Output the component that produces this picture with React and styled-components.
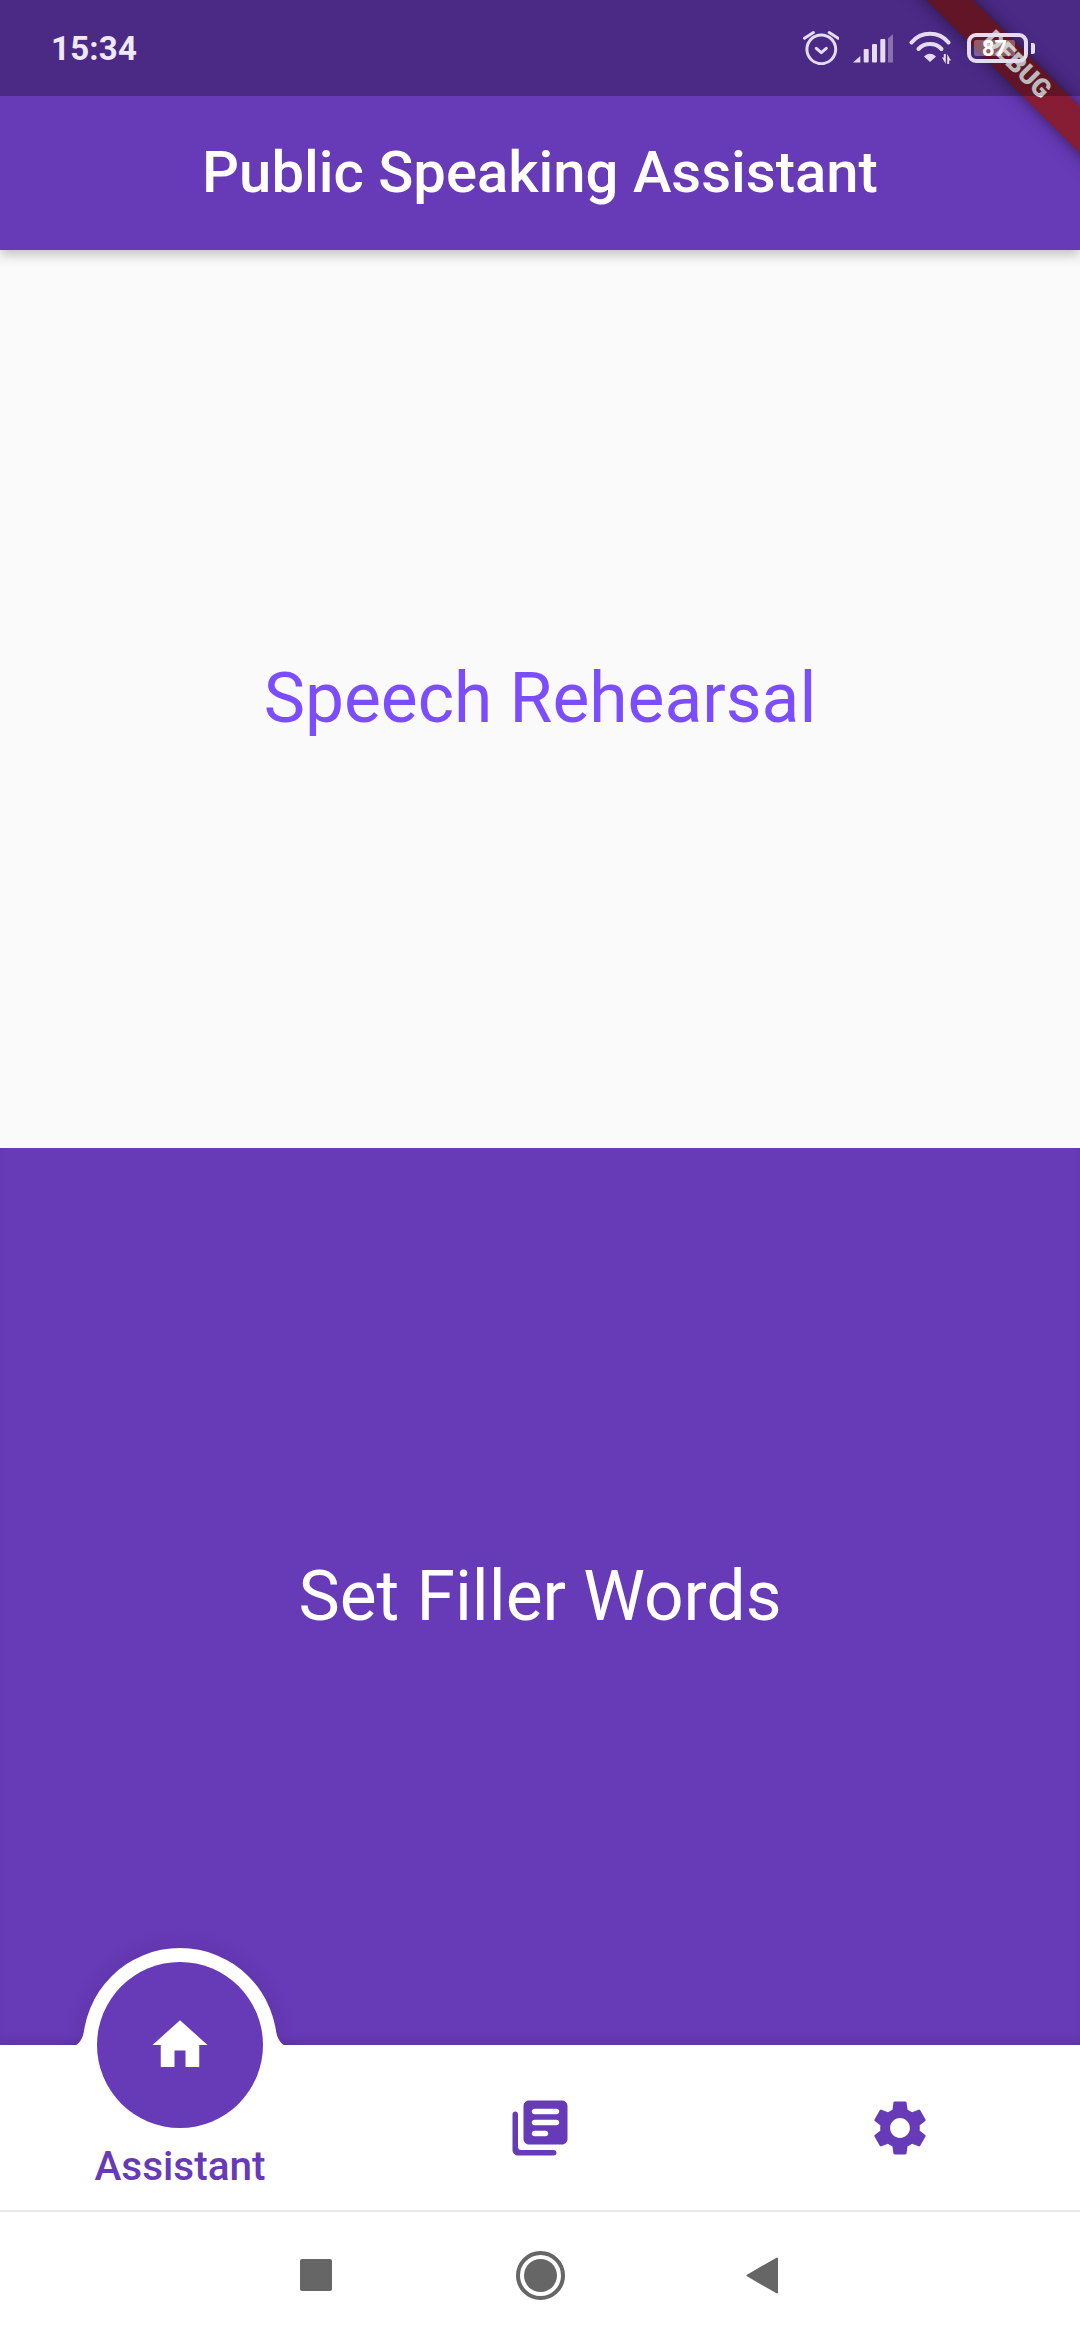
import styled, { createGlobalStyle } from "styled-components";

const PURPLE = "#673ab7";

const GlobalStyle = createGlobalStyle`
  html, body {
    margin: 0;
    padding: 0;
    background: #ffffff;
  }
  * {
    box-sizing: border-box;
  }
`;

const AlarmIcon = () => (
  <svg width="36" height="34" viewBox="0 0 36 34" fill="none" stroke="#e4dcf0" strokeWidth="3" strokeLinecap="round" strokeLinejoin="round">
    <circle cx="18.3" cy="18.3" r="14.4" />
    <path d="M1.5 7.3 10.4 1.6M26.2 1.6l8.9 5.7" />
    <path d="M13.3 17.3l5 4.4 5-4.4" />
  </svg>
);

const SignalIcon = () => (
  <SignalSvg width="40" height="29" viewBox="0 0 40 29" fill="#e4dcf0">
    <path d="M0 28.5 7.3 22v6.5z" />
    <rect x="10.7" y="15" width="5" height="13.5" rx="1" />
    <rect x="19" y="10" width="5" height="18.5" rx="1" />
    <rect x="27.3" y="5" width="5" height="23.5" rx="1" />
    <path d="M35 4.5 40 0v28.5h-5z" opacity="0.4" />
  </SignalSvg>
);

const WifiIcon = () => (
  <svg width="44" height="34" viewBox="0 0 44 34" fill="none">
    <path d="M2.5 11.5A24 24 0 0 1 39.5 11.5" stroke="#e4dcf0" strokeWidth="4" strokeLinecap="round" />
    <path d="M9.5 18A16 16 0 0 1 32.5 18" stroke="#e4dcf0" strokeWidth="4" strokeLinecap="round" />
    <path d="M16 25.5Q21 21.5 26 25.5L21 30z" fill="#e4dcf0" stroke="#e4dcf0" strokeWidth="1.6" strokeLinejoin="round" />
    <path d="M33 26.5h1.8v-3.5h2v10l-3.8-6.5zM38.2 23l3.8 6.5h-1.8V33h-2z" fill="#e4dcf0" />
  </svg>
);

const HomeIcon = () => (
  <svg width="66" height="66" viewBox="0 0 24 24" fill="#ffffff">
    <path d="M10 20v-6h4v6h5v-8h3L12 3 2 12h3v8z" />
  </svg>
);

const LibraryIcon = () => (
  <svg width="66" height="66" viewBox="0 0 24 24" fill={PURPLE}>
    <path d="M3 6c-.55 0-1 .45-1 1v13c0 1.1.9 2 2 2h13c.55 0 1-.45 1-1s-.45-1-1-1H5c-.55 0-1-.45-1-1V7c0-.55-.45-1-1-1zm17-4H8c-1.1 0-2 .9-2 2v12c0 1.1.9 2 2 2h12c1.1 0 2-.9 2-2V4c0-1.1-.9-2-2-2zm-2 9h-8c-.55 0-1-.45-1-1s.45-1 1-1h8c.55 0 1 .45 1 1s-.45 1-1 1zm-4 4h-4c-.55 0-1-.45-1-1s.45-1 1-1h4c.55 0 1 .45 1 1s-.45 1-1 1zm4-8h-8c-.55 0-1-.45-1-1s.45-1 1-1h8c.55 0 1 .45 1 1s-.45 1-1 1z" />
  </svg>
);

const SettingsIcon = () => (
  <svg width="66" height="66" viewBox="0 0 24 24" fill={PURPLE}>
    <path d="M19.14 12.94c.04-.3.06-.61.06-.94 0-.32-.02-.64-.07-.94l2.03-1.58c.18-.14.23-.41.12-.61l-1.92-3.32c-.12-.22-.37-.29-.59-.22l-2.39.96c-.5-.38-1.03-.7-1.62-.94l-.36-2.54c-.04-.24-.24-.41-.48-.41h-3.84c-.24 0-.43.17-.47.41l-.36 2.54c-.59.24-1.13.57-1.62.94l-2.39-.96c-.22-.08-.47 0-.59.22L2.74 8.87c-.12.21-.08.47.12.61l2.03 1.58c-.05.3-.09.63-.09.94s.02.64.07.94l-2.03 1.58c-.18.14-.23.41-.12.61l1.92 3.32c.12.22.37.29.59.22l2.39-.96c.5.38 1.03.7 1.62.94l.36 2.54c.05.24.24.41.48.41h3.84c.24 0 .44-.17.47-.41l.36-2.54c.59-.24 1.13-.56 1.62-.94l2.39.96c.22.08.47 0 .59-.22l1.92-3.32c.12-.22.07-.47-.12-.61l-2.01-1.58zM12 15.6c-1.98 0-3.6-1.62-3.6-3.6s1.62-3.6 3.6-3.6 3.6 1.62 3.6 3.6-1.62 3.6-3.6 3.6z" />
  </svg>
);

const BackIcon = () => (
  <svg width="32" height="37" viewBox="0 0 32 37" fill="#666666" stroke="#666666" strokeWidth="2" strokeLinejoin="round">
    <path d="M31 1.5v34L1.5 18.5z" />
  </svg>
);

const Fillet = ({ right }) => (
  <FilletShape $right={right} width="20" height="16" viewBox="0 0 20 16" fill="#ffffff">
    <path d="M2 16C8 16 12 10 14 2h6v14z" />
  </FilletShape>
);

const App = () => {
  return (
    <Screen>
      <GlobalStyle />
      <AppBar>Public Speaking Assistant</AppBar>
      <Main>
        <Panel>Speech Rehearsal</Panel>
        <Panel $filled>Set Filler Words</Panel>
      </Main>
      <BottomNav>
        <Notch>
          <Fillet />
          <Fillet right />
        </Notch>
        <NavRow>
          <NavItem>
            <ActiveCircle>
              <HomeIcon />
            </ActiveCircle>
            <NavLabel>Assistant</NavLabel>
          </NavItem>
          <NavItem>
            <LibraryIcon />
          </NavItem>
          <NavItem>
            <SettingsIcon />
          </NavItem>
        </NavRow>
      </BottomNav>
      <SystemNav>
        <SquareKey />
        <HomeKey>
          <HomeKeyDot />
        </HomeKey>
        <BackIcon />
      </SystemNav>
      <BannerClip>
        <DebugBanner>DEBUG</DebugBanner>
      </BannerClip>
      <StatusBar>
        <Clock>15:34</Clock>
        <StatusIcons>
          <AlarmIcon />
          <SignalIcon />
          <WifiIcon />
          <Battery>
            <BatteryBody>
              <BatteryLevel />
              <BatteryText>87</BatteryText>
            </BatteryBody>
            <BatteryTip />
          </Battery>
        </StatusIcons>
      </StatusBar>
    </Screen>
  );
};

const Screen = styled.div`
  position: relative;
  width: 1080px;
  height: 2340px;
  display: flex;
  flex-direction: column;
  overflow: hidden;
  font-family: Roboto, "Noto Sans", sans-serif;
  background: #ffffff;
`;

/* the system bar dims whatever is under it, the debug ribbon too */
const StatusBar = styled.div`
  position: absolute;
  z-index: 4;
  top: 0;
  left: 0;
  right: 0;
  height: 96px;
  display: flex;
  align-items: center;
  justify-content: space-between;
  padding: 0 45px 0 51px;
  background: rgba(0, 0, 0, 0.27);
`;

const Clock = styled.div`
  font-size: 33px;
  font-weight: 700;
  letter-spacing: 0.2px;
  color: #efe9f7;
`;

const StatusIcons = styled.div`
  display: flex;
  align-items: center;
  gap: 14px;
`;

const SignalSvg = styled.svg`
  margin-right: 2px;
`;

const Battery = styled.div`
  display: flex;
  align-items: center;
  gap: 3px;
`;

const BatteryBody = styled.div`
  position: relative;
  width: 61px;
  height: 30px;
  padding: 3px;
  border: 4.5px solid #e4dcf0;
  border-radius: 9px;
`;

const BatteryLevel = styled.div`
  width: 87%;
  height: 100%;
  background: rgba(255, 255, 255, 0.3);
  border-radius: 2px;
`;

const BatteryText = styled.div`
  position: absolute;
  inset: 0;
  display: flex;
  align-items: center;
  justify-content: center;
  padding-right: 6px;
  font-size: 22px;
  font-weight: 700;
  color: #ffffff;
`;

const BatteryTip = styled.div`
  width: 4px;
  height: 11px;
  background: #e4dcf0;
  border-radius: 0 2px 2px 0;
`;

const AppBar = styled.div`
  position: relative;
  z-index: 2;
  height: 250px;
  flex-shrink: 0;
  display: flex;
  align-items: center;
  justify-content: center;
  padding: 96px 0 3px;
  font-size: 58px;
  font-weight: 500;
  color: #ffffff;
  background: ${PURPLE};
  box-shadow: 0 5px 11px rgba(0, 0, 0, 0.22);
`;

const Main = styled.div`
  flex: 1;
  display: flex;
  flex-direction: column;
`;

const Panel = styled.div`
  flex: 1;
  display: flex;
  align-items: center;
  justify-content: center;
  font-size: 69.5px;
  font-weight: 400;
  color: ${(props) => (props.$filled ? "#ffffff" : "#7c4dff")};
  background: ${(props) => (props.$filled ? PURPLE : "#fafafa")};
  box-shadow: ${(props) => (props.$filled ? "inset 0 -10px 12px -8px rgba(0, 0, 0, 0.14)" : "none")};
`;

const BottomNav = styled.div`
  position: relative;
  height: 165px;
  flex-shrink: 0;
`;

const Notch = styled.div`
  position: absolute;
  left: 83px;
  top: -97px;
  width: 194px;
  height: 194px;
  border-radius: 50%;
  background: #ffffff;
  box-shadow: 0 0 22px rgba(0, 0, 0, 0.1);
`;

const FilletShape = styled.svg`
  position: absolute;
  top: 82px;
  left: ${(props) => (props.$right ? "auto" : "-13px")};
  right: ${(props) => (props.$right ? "-13px" : "auto")};
  transform: ${(props) => (props.$right ? "scaleX(-1)" : "none")};
`;

const NavRow = styled.div`
  position: relative;
  height: 100%;
  display: grid;
  grid-template-columns: repeat(3, 1fr);
  background: #ffffff;
`;

const NavItem = styled.div`
  position: relative;
  display: flex;
  align-items: flex-start;
  justify-content: center;
  padding-top: 50px;
`;

const ActiveCircle = styled.div`
  position: absolute;
  left: 97px;
  top: -83px;
  width: 166px;
  height: 166px;
  display: flex;
  align-items: center;
  justify-content: center;
  border-radius: 50%;
  background: ${PURPLE};
`;

const NavLabel = styled.div`
  position: absolute;
  left: 0;
  right: 0;
  top: 97px;
  text-align: center;
  font-size: 40.5px;
  line-height: 48px;
  font-weight: 500;
  color: ${PURPLE};
`;

const SystemNav = styled.div`
  height: 130px;
  flex-shrink: 0;
  display: flex;
  align-items: center;
  justify-content: center;
  gap: 183px;
  padding-right: 3px;
  padding-bottom: 2px;
  border-top: 2px solid #e8e8e8;
  background: #ffffff;
`;

const SquareKey = styled.div`
  width: 32px;
  height: 32px;
  border-radius: 2px;
  background: #666666;
`;

const HomeKey = styled.div`
  width: 49px;
  height: 49px;
  margin: 0 -2px 0 1px;
  display: flex;
  align-items: center;
  justify-content: center;
  border: 4px solid #666666;
  border-radius: 50%;
`;

const HomeKeyDot = styled.div`
  width: 33px;
  height: 33px;
  border-radius: 50%;
  background: #666666;
`;

const BannerClip = styled.div`
  position: absolute;
  z-index: 3;
  top: 0;
  right: 0;
  width: 300px;
  height: 240px;
  overflow: hidden;
  pointer-events: none;
`;

const DebugBanner = styled.div`
  position: absolute;
  left: 0;
  top: 0;
  width: 400px;
  height: 33px;
  display: flex;
  align-items: center;
  justify-content: center;
  padding-bottom: 5px;
  transform: translate(36px, 49.5px) rotate(45deg);
  font-size: 26px;
  font-weight: 900;
  line-height: 28px;
  color: #ffffff;
  background-color: rgba(0, 0, 0, 0.5);
  background-image: linear-gradient(rgba(183, 28, 28, 0.627), rgba(183, 28, 28, 0.627));
  box-shadow: 0 0 16px rgba(0, 0, 0, 0.5);
`;

export default App;
